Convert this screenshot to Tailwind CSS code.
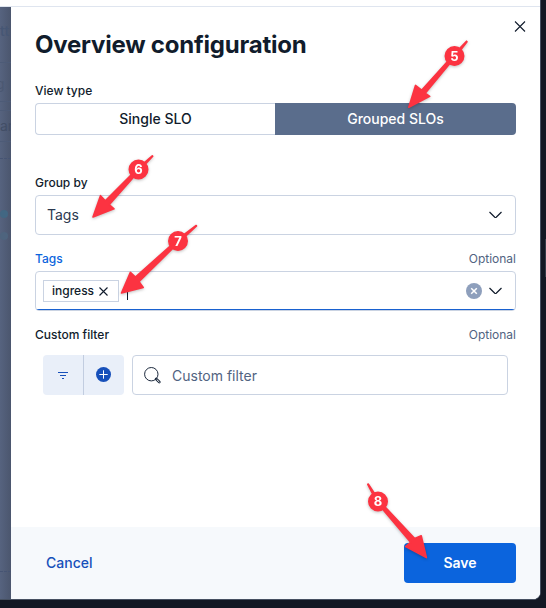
<!DOCTYPE html>
<html lang="en">
<head>
<meta charset="utf-8">
<title>Overview configuration</title>
<script src="https://cdn.jsdelivr.net/npm/@tailwindcss/browser@4"></script>
</head>
<body class="relative w-[546px] h-[608px] overflow-hidden bg-[#131824] font-['Inter',sans-serif] text-[#111c2c]">
<div class="flex flex-col w-[541px] h-[600px] overflow-hidden rounded-br-[8px] bg-white border-r border-b border-[#465061]">
  <header class="h-[7px] shrink-0 bg-white border-b border-[#dfe5ef]"></header>
  <div class="flex flex-1 min-h-0">
    <aside class="relative w-[11px] shrink-0 overflow-hidden bg-linear-to-r from-[#56637f] to-[#4b566e] text-[#465674] text-[14px] leading-5">
      <div class="absolute left-0 top-[14px] font-medium">tt</div>
      <div class="absolute left-0 top-[55px] w-full border-t border-[#4d5b77]"></div>
      <div class="absolute -left-[4px] top-[67px] whitespace-nowrap text-[#4b5872]">g l</div>
      <div class="absolute left-0 top-[94px] w-full h-[10px] border-y border-[#4d5b77]"></div>
      <div class="absolute left-0 top-[109px] text-[#424e66]">ar</div>
      <div class="absolute left-0 top-[134px] w-full border-t border-[#4d5b77]"></div>
      <div class="absolute left-0 top-[151px] w-full border-t border-dashed border-[#465473]"></div>
      <div class="absolute left-0 top-[203px] size-2 rounded-full bg-[#426783]"></div>
      <div class="absolute left-0 top-[225px] size-2 rounded-full bg-[#4e647e]"></div>
      <div class="absolute left-0 top-[564px] w-full border-t border-dashed border-[#465473]"></div>
    </aside>
    <main class="relative flex flex-1 flex-col bg-white">
      <button class="absolute right-[14px] top-[14px]" aria-label="Close">
        <svg width="12" height="12" viewBox="0 0 12 12" fill="none" stroke="#111c2c" stroke-width="1.1"><path d="M1 .5 11 10.5M11 .5 1 10.5"/></svg>
      </button>
      <div class="flex flex-1 flex-col px-6 pt-[22px]">
        <h1 class="h-8 text-[24px] leading-8 font-bold tracking-[-0.22px]">Overview configuration</h1>
        <div class="mt-[22px] h-4 text-[12px] leading-4 font-medium">View type</div>
        <div class="mt-1 flex h-8 shrink-0 text-[14px] font-medium">
          <div class="flex w-60 items-center justify-center rounded-l border border-r-0 border-[#cad3e2] pb-px">Single SLO</div>
          <div class="flex flex-1 items-center justify-center rounded-r bg-[#5a6d8c] pb-px text-white">Grouped SLOs</div>
        </div>
        <div class="mt-10 h-4 text-[12px] leading-4 font-medium">Group by</div>
        <div class="mt-1 flex h-10 shrink-0 items-center justify-between rounded border border-[#cad3e2] pb-px pl-[11px] pr-[13px] text-[14px] text-[#2b394f]">
          Tags
          <svg class="mt-px" width="13" height="8" viewBox="0 0 13 8" fill="none" stroke="#111c2c" stroke-width="1.2"><path d="M.5 1 5.8 6.2Q6.5 6.8 7.2 6.2L12.5 1"/></svg>
        </div>
        <div class="mt-4 flex h-4 justify-between text-[12px] leading-4"><span class="font-medium text-[#0b64dd]">Tags</span><span class="text-[#516381]">Optional</span></div>
        <div class="relative mt-1 flex h-10 shrink-0 items-center overflow-hidden rounded border border-[#cad3e2] pl-[7px] pr-[13px]">
          <div class="flex h-[22px] w-[76px] items-center border border-[#cad3e2] pl-2 text-[12px] font-medium">ingress
            <svg class="ml-[5px]" width="9" height="9" viewBox="0 0 9 9" fill="none" stroke="#111c2c" stroke-width="1.1"><path d="M.5.5 8.5 8.5M8.5.5.5 8.5"/></svg>
          </div>
          <div class="ml-2 mt-[3px] h-[15px] w-px bg-[#111c2c]"></div>
          <svg class="ml-auto" width="16" height="16" viewBox="0 0 16 16"><circle cx="8" cy="8" r="8" fill="#8e9fbc"/><path d="m5.2 5.2 5.6 5.6m0-5.6-5.6 5.6" stroke="#fff" stroke-width="1.5"/></svg>
          <svg class="ml-[7px]" width="13" height="8" viewBox="0 0 13 8" fill="none" stroke="#111c2c" stroke-width="1.2"><path d="M.5 1 5.8 6.2Q6.5 6.8 7.2 6.2L12.5 1"/></svg>
          <div class="absolute inset-x-0 bottom-0 h-px bg-[#1861d0]"></div>
        </div>
        <div class="mt-4 flex h-4 justify-between text-[12px] leading-4"><span class="font-medium">Custom filter</span><span class="text-[#516381]">Optional</span></div>
        <div class="mt-3 flex h-10 shrink-0 gap-2 px-2">
          <div class="flex w-[81px] overflow-hidden rounded bg-[#e9eff9]">
            <div class="flex w-[41px] items-center justify-center border-r border-[#c2cde0]">
              <svg width="10" height="8" viewBox="0 0 10 8" stroke="#1750ba" stroke-width="1"><path d="M0 1.5H10M2 4.5H8M4 7.5H6"/></svg>
            </div>
            <div class="flex flex-1 items-center justify-center pr-px pb-px">
              <svg width="15" height="15" viewBox="0 0 15 15"><circle cx="7.5" cy="7.5" r="7.5" fill="#1750ba"/><path d="M7.5 3.3V11.7M3.3 7.5H11.7" stroke="#fff"/></svg>
            </div>
          </div>
          <div class="flex flex-1 items-center rounded border border-[#cad3e2] pl-[11px] text-[14px] text-[#516381]">
            <svg class="mr-[11px]" width="17" height="17" viewBox="0 0 17 17" fill="none" stroke="#1d2a3e" stroke-width="1"><circle cx="7.3" cy="7.2" r="6.7"/><path d="M12.2 12 15.3 15" stroke-width="2.6" stroke-linecap="round"/><path d="M13 12.8 15.2 14.9" stroke="#fff" stroke-width="1" stroke-linecap="round"/></svg>
            Custom filter
          </div>
        </div>
      </div>
      <footer class="flex h-[72px] shrink-0 items-center justify-between bg-[#f6f9fc] pl-[35px] pr-6 text-[14px]">
        <span class="pb-0.5 font-medium text-[#1750ba]">Cancel</span>
        <button class="h-10 w-28 rounded bg-[#0b64dd] pb-px font-semibold text-white">Save</button>
      </footer>
    </main>
  </div>
</div>
<div class="absolute right-0 top-[239px] h-[38px] w-px bg-[#353b48]"></div>
<svg class="absolute left-0 top-0 drop-shadow-[0_1px_1.5px_rgb(0_0_0/0.25)]" width="546" height="608" viewBox="0 0 546 608" fill="#fc3341" stroke="#fc3341" stroke-width="1.6" stroke-linejoin="round">
  <g><path d="M466.5 41.2 453.6 54.8 421.6 90.2 415.5 85.4 408.8 107.2 429.7 96.3 425.2 93.2 455.4 56.8 467 41.7Z"/><circle cx="454.5" cy="56" r="9.2"/></g>
  <g><path d="M152.3 155.8 137.5 168.6 105.3 200.8 100.5 195.7 93 217 114 208.8 109.2 204.6 139.4 170.5 152.7 156.2Z"/><circle cx="138.5" cy="169.5" r="9.2"/></g>
  <g><path d="M196.2 225.5 177 240 135.4 277 130.4 272.4 121.5 293 143.2 287.4 138.9 281.6 179 242.2 196.5 225.9Z"/><circle cx="178" cy="241" r="9.2"/></g>
  <g><path d="M367.8 484.4 377 502.5 410.6 542.3 405.7 546.6 426.4 557.6 421.2 535.7 414.7 538.6 379.2 500.7 368.2 484Z"/><circle cx="378" cy="501.5" r="9.2"/></g>
  <g class="font-['Inter',sans-serif] text-[13px] font-bold" fill="#fff" stroke="none" text-anchor="middle"><text x="454.5" y="60.5">5</text><text x="138.5" y="174">6</text><text x="178" y="245.5">7</text><text x="378" y="506">8</text></g>
</svg>
</body>
</html>
